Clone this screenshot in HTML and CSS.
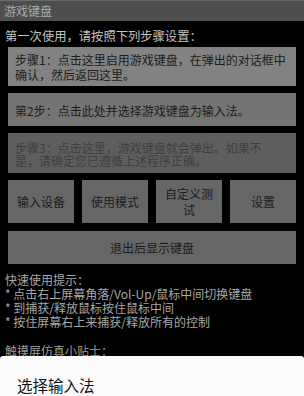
FILE: index.html
```html
<!DOCTYPE html>
<html lang="zh-CN">
<head>
  <meta charset="UTF-8" />
  <title>游戏键盘</title>
  <link rel="stylesheet" href="styles.css">
</head>
<body>

  <header class="title-bar">游戏键盘</header>

  <main class="content">
    <p class="intro">第一次使用，请按照下列步骤设置：</p>

    <div class="steps">
      <button class="step step-1">步骤1：点击这里启用游戏键盘，在弹出的对话框中确认，然后返回这里。</button>
      <button class="step step-2">第2步：点击此处并选择游戏键盘为输入法。</button>
      <button class="step step-3" disabled>步骤3：点击这里，游戏键盘就会弹出。如果不是，请确定您已遵循上述程序正确。</button>

      <div class="btn-row">
        <button class="btn">输入设备</button>
        <button class="btn">使用模式</button>
        <button class="btn">自定义测试</button>
        <button class="btn">设置</button>
      </div>

      <button class="btn btn-wide">退出后显示键盘</button>
    </div>

    <div class="tips">
      <p>快速使用提示：</p>
      <p>* 点击右上屏幕角落/Vol-Up/鼠标中间切换键盘</p>
      <p>* 到捕获/释放鼠标按住鼠标中间</p>
      <p>* 按住屏幕右上来捕获/释放所有的控制</p>
      <p class="tips-title">触摸屏仿真小贴士：</p>
    </div>
  </main>

  <div class="sheet">
    <h2 class="sheet-title">选择输入法</h2>
  </div>

</body>
</html>
```

FILE: styles.css
```css
body {
  margin: 0;
  width: 304px;
  height: 396px;
  overflow: hidden;
  position: relative;
  background: #000;
  font-family: "Noto Sans CJK SC", "Liberation Sans", sans-serif;
  color: #bdbdbd;
}

p, h2 {
  margin: 0;
}

.title-bar {
  height: 20px;
  line-height: 20px;
  padding-left: 4px;
  background: #4e4e4e;
  border-top: 1px solid #6a6a6a;
  color: #ababab;
  font-size: 12px;
}

.content {
  padding: 0 8px;
}

.intro {
  margin: 5px 0 0 -3px;
  height: 21px;
  line-height: 21px;
  font-size: 12.3px;
  color: #c4c4c4;
}

.steps {
  display: flex;
  flex-direction: column;
  gap: 7px;
}

button {
  font-family: inherit;
  border: none;
  border-radius: 0;
  margin: 0;
  cursor: pointer;
}

.step {
  flex: none;
  text-align: left;
  font-size: 12px;
  line-height: 15px;
  color: #1c1c1c;
  padding: 5px 10px 4px 7px;
}

.step-1 {
  background: #828282;
}

.step-2 {
  background: #747474;
  padding: 10px 7px 8px;
}

.step-3 {
  background: #5e5e5e;
  color: #3e3e3e;
  line-height: 13px;
  padding: 8px 12px 6px 7px;
}

.btn-row {
  display: flex;
  gap: 8px;
}

.btn {
  flex: 1;
  height: 43px;
  padding: 0 6px;
  background: #666;
  color: #1c1c1c;
  font-size: 12px;
  line-height: 16px;
}

.btn-wide {
  flex: none;
  height: 33px;
  margin-top: 1px;
}

.tips {
  margin: 9px 0 0 -3px;
  font-size: 12px;
  line-height: 14px;
  color: #a8a8a8;
}

.tips-title {
  margin-top: 15px;
  text-decoration: underline;
  color: #9a9a9a;
}

.sheet {
  position: absolute;
  left: 0;
  right: 0;
  top: 356px;
  bottom: 0;
  background: #fbfbfb;
  border-radius: 3px 3px 0 0;
}

.sheet-title {
  padding: 19px 0 0 17px;
  font-size: 15.5px;
  font-weight: normal;
  line-height: 20px;
  color: #111;
}
```
